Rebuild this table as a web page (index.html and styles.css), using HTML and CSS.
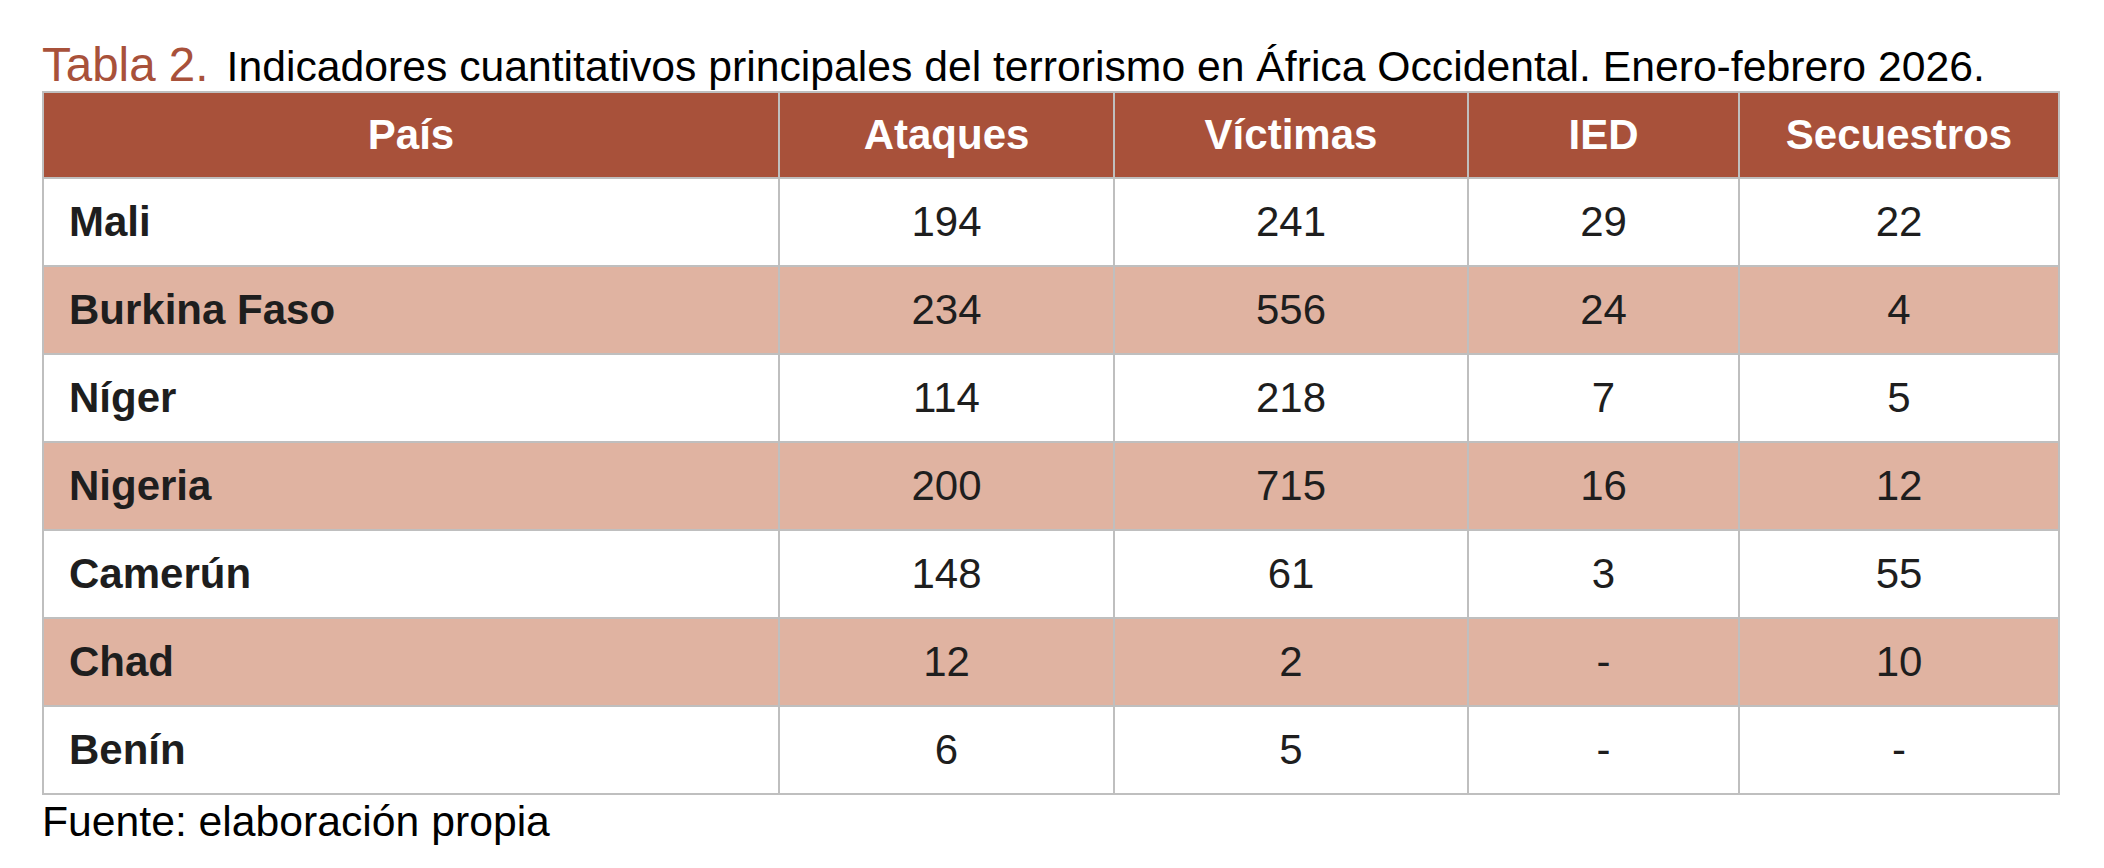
FILE: index.html
```html
<!DOCTYPE html>
<html lang="es">
<head>
<meta charset="utf-8">
<title>Tabla 2</title>
<link rel="stylesheet" href="styles.css">
</head>
<body>
<div class="page">
  <div class="caption"><span class="label">Tabla 2.</span> <span class="caption-text">Indicadores cuantitativos principales del terrorismo en África Occidental. Enero-febrero 2026.</span></div>
  <table class="data">
    <colgroup>
      <col class="c-pais"><col class="c-ataques"><col class="c-victimas"><col class="c-ied"><col class="c-secuestros">
    </colgroup>
    <thead>
      <tr><th>País</th><th>Ataques</th><th>Víctimas</th><th>IED</th><th>Secuestros</th></tr>
    </thead>
    <tbody>
      <tr><td class="country">Mali</td><td>194</td><td>241</td><td>29</td><td>22</td></tr>
      <tr class="alt"><td class="country">Burkina Faso</td><td>234</td><td>556</td><td>24</td><td>4</td></tr>
      <tr><td class="country">Níger</td><td>114</td><td>218</td><td>7</td><td>5</td></tr>
      <tr class="alt"><td class="country">Nigeria</td><td>200</td><td>715</td><td>16</td><td>12</td></tr>
      <tr><td class="country">Camerún</td><td>148</td><td>61</td><td>3</td><td>55</td></tr>
      <tr class="alt"><td class="country">Chad</td><td>12</td><td>2</td><td>-</td><td>10</td></tr>
      <tr><td class="country">Benín</td><td>6</td><td>5</td><td>-</td><td>-</td></tr>
    </tbody>
  </table>
  <div class="source">Fuente: elaboración propia</div>
</div>
</body>
</html>
```
FILE: styles.css
```css
html, body {
  margin: 0;
  padding: 0;
  background: #ffffff;
}
body {
  font-family: "Liberation Sans", Arial, Helvetica, sans-serif;
  color: #000;
}
.page {
  padding: 41px 0 0 42px;
  width: 2016px;
}
.caption {
  font-size: 47.5px;
  line-height: 47px;
  white-space: nowrap;
  margin-bottom: 3px;
}
.caption .label {
  color: #a8513a;
}
.caption .caption-text {
  font-size: 42.7px;
  line-height: 1;
  color: #000;
  margin-left: 5px;
}
.data {
  border-collapse: collapse;
  table-layout: fixed;
  width: 2016px;
  font-size: 42px;
  color: #1e1e1e;
}
.c-pais { width: 736px; }
.c-ataques { width: 335px; }
.c-victimas { width: 354px; }
.c-ied { width: 271px; }
.c-secuestros { width: 320px; }
.data th, .data td {
  border: 2px solid #bfbfbf;
  padding: 0;
  text-align: center;
  vertical-align: middle;
}
.data thead tr {
  height: 86px;
}
.data th {
  background: #a8513a;
  color: #ffffff;
  font-weight: bold;
}
.data tbody tr {
  height: 88px;
}
.data tbody tr.alt td {
  background: #e0b3a1;
}
.data td.country {
  text-align: left;
  font-weight: bold;
  padding-left: 25px;
}
.source {
  font-size: 42.7px;
  line-height: 48px;
  margin-top: 2px;
  color: #000;
}
```
